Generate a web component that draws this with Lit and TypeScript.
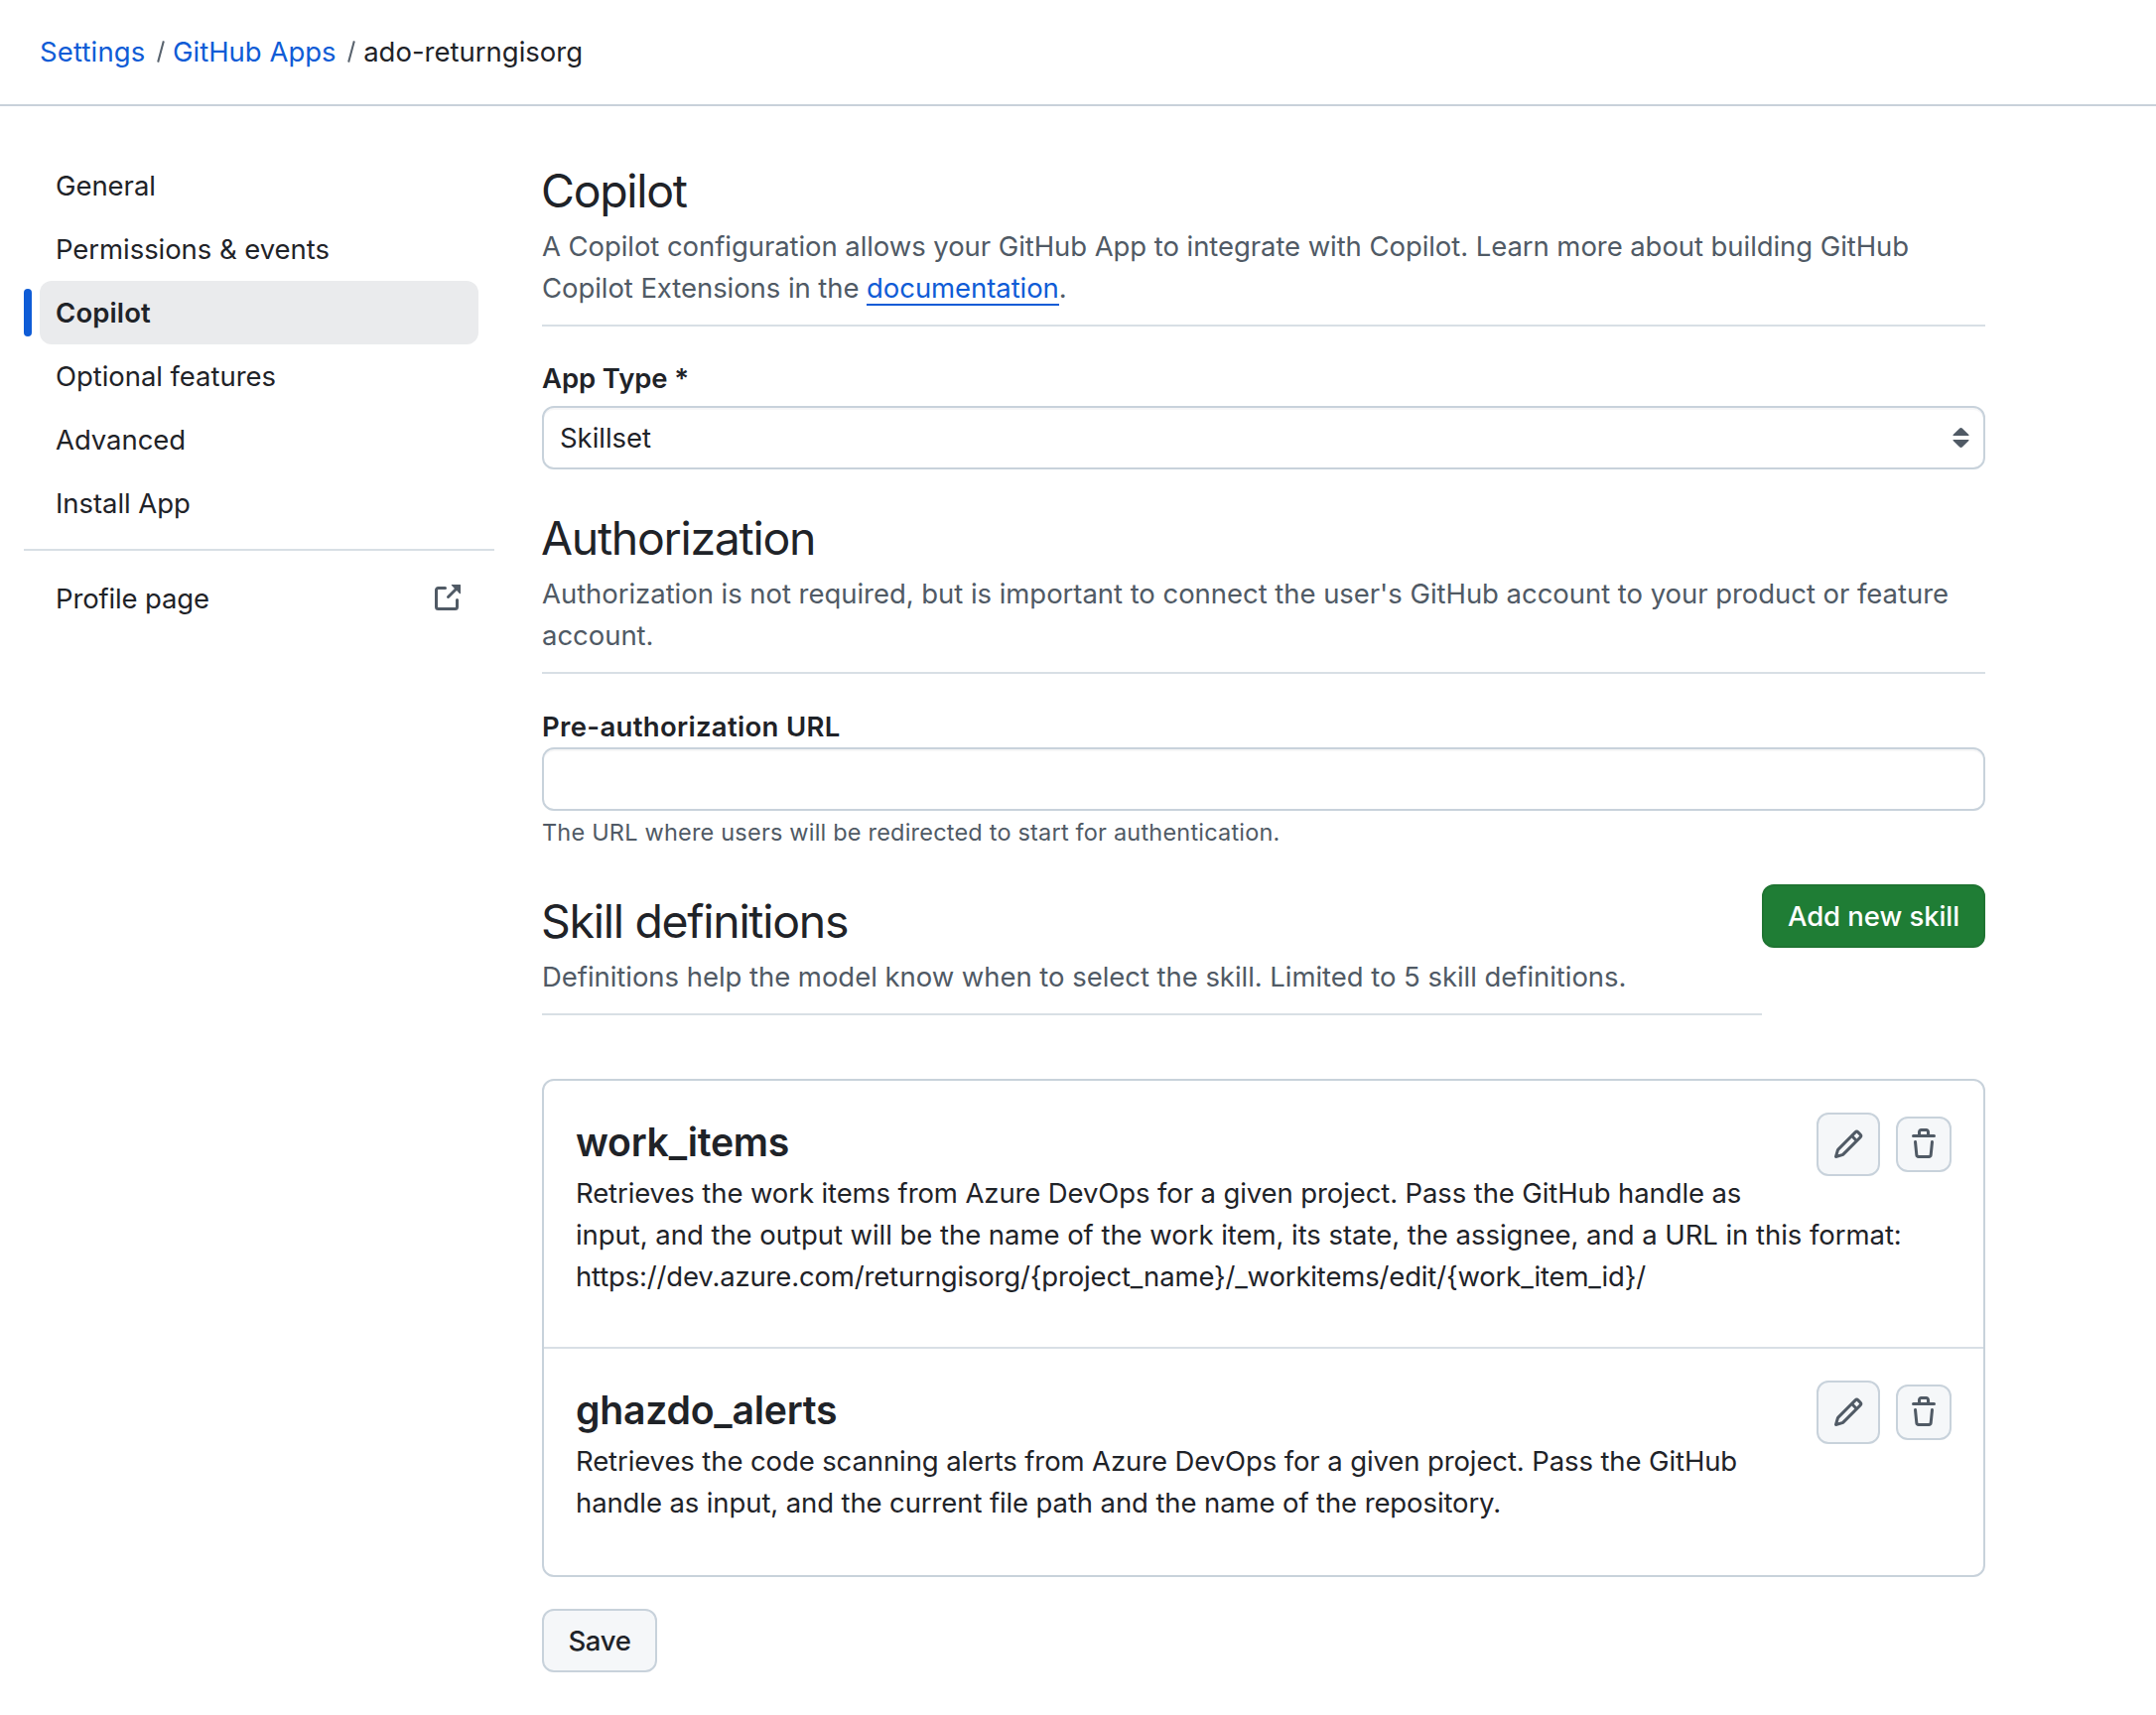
import { LitElement, html, css, svg } from "lit";
import { customElement } from "lit/decorators.js";
import { classMap } from "lit/directives/class-map.js";

const externalIcon = svg`<path d="M3.75 2h3.5a.75.75 0 0 1 0 1.5h-3.5a.25.25 0 0 0-.25.25v8.5c0 .138.112.25.25.25h8.5a.25.25 0 0 0 .25-.25v-3.5a.75.75 0 0 1 1.5 0v3.5A1.75 1.75 0 0 1 12.25 14h-8.5A1.75 1.75 0 0 1 2 12.25v-8.5C2 2.784 2.784 2 3.75 2Zm6.854-1h4.146a.25.25 0 0 1 .25.25v4.146a.25.25 0 0 1-.427.177L13.03 4.03 9.28 7.78a.751.751 0 0 1-1.042-.018.751.751 0 0 1-.018-1.042l3.75-3.75-1.543-1.543A.25.25 0 0 1 10.604 1Z"/>`;
const pencilIcon = svg`<path d="M11.013 1.427a1.75 1.75 0 0 1 2.474 0l1.086 1.086a1.75 1.75 0 0 1 0 2.474l-8.61 8.61c-.21.21-.47.364-.756.445l-3.251.93a.75.75 0 0 1-.927-.928l.929-3.25c.081-.286.235-.547.445-.758l8.61-8.61Zm.176 4.823L9.75 4.81l-6.286 6.287a.253.253 0 0 0-.064.108l-.558 1.953 1.953-.558a.253.253 0 0 0 .108-.064Zm1.238-3.763a.25.25 0 0 0-.354 0L10.811 3.75l1.439 1.44 1.263-1.263a.25.25 0 0 0 0-.354Z"/>`;
const trashIcon = svg`<path d="M11 1.75V3h2.25a.75.75 0 0 1 0 1.5H2.75a.75.75 0 0 1 0-1.5H5V1.75C5 .784 5.784 0 6.75 0h2.5C10.216 0 11 .784 11 1.75ZM4.496 6.675l.66 6.6a.25.25 0 0 0 .249.225h5.19a.25.25 0 0 0 .249-.225l.66-6.6a.75.75 0 0 1 1.492.149l-.66 6.6A1.748 1.748 0 0 1 10.595 15h-5.19a1.75 1.75 0 0 1-1.741-1.575l-.66-6.6a.75.75 0 1 1 1.492-.15ZM6.5 1.75V3h3V1.75a.25.25 0 0 0-.25-.25h-2.5a.25.25 0 0 0-.25.25Z"/>`;

const icon = (shape: unknown) =>
  html`<svg class="icon" viewBox="0 0 16 16" width="32" height="32" fill="currentColor" aria-hidden="true">${shape}</svg>`;

interface Skill {
  name: string;
  lines: { text: string; fit: string }[];
}

const NAV = ["General", "Permissions & events", "Copilot", "Optional features", "Advanced", "Install App"];

const SKILLS: Skill[] = [
  {
    name: "work_items",
    lines: [
      { text: "Retrieves the work items from Azure DevOps for a given project. Pass the GitHub handle as", fit: "snug" },
      { text: "input, and the output will be the name of the work item, its state, the assignee, and a URL in this format:", fit: "loose" },
      { text: "https://dev.azure.com/returngisorg/{project_name}/_workitems/edit/{work_item_id}/", fit: "tight" },
    ],
  },
  {
    name: "ghazdo_alerts",
    lines: [
      { text: "Retrieves the code scanning alerts from Azure DevOps for a given project. Pass the GitHub", fit: "snug" },
      { text: "handle as input, and the current file path and the name of the repository.", fit: "snug" },
    ],
  },
];

@customElement("app-root")
export class AppRoot extends LitElement {
  static styles = css`
    :host {
      display: block;
      min-height: 1728px;
      background: #fff;
      color: #1f2328;
      font: 400 27.5px/42px Inter, "Liberation Sans", sans-serif;
      letter-spacing: -0.04px;
    }
    * { box-sizing: border-box; }
    a { color: #0f5cd6; text-decoration: none; }
    h1, h2, h3, p, ul { margin: 0; padding: 0; }
    .icon { display: block; flex: none; }

    .crumbs {
      display: flex;
      align-items: center;
      height: 107px;
      padding: 0 40px 1px;
      border-bottom: 2px solid #c8d1da;
      letter-spacing: 0;
    }
    .crumbs .first { letter-spacing: 0.15px; }
    .slash {
      width: 2px;
      height: 22px;
      margin: 0 11.500px 0 14px;
      background: #59636e;
      transform: rotate(15deg);
    }

    .layout { display: flex; gap: 48px; padding: 48px 0 0 24px; }

    .side { width: 474px; flex: none; }
    .side ul { list-style: none; }
    .nav {
      display: flex;
      align-items: center;
      justify-content: space-between;
      position: relative;
      height: 64px;
      margin: 0 16px;
      padding: 0 16px;
      border-radius: 12px;
      letter-spacing: -0.06px;
    }
    .nav.current { background: #eaebed; font-weight: 600; letter-spacing: 0.12px; }
    .nav.current::before {
      content: "";
      position: absolute;
      left: -16px;
      top: 8px;
      width: 8px;
      height: 48px;
      border-radius: 4px;
      background: #0f5cd6;
    }
    .nav.profile { letter-spacing: -0.14px; }
    .nav .icon { color: #505a65; }
    .rule { height: 2px; margin: 14px 0 16px; background: #d8dfe5; }

    .main { width: 1454px; flex: none; }
    .head { border-bottom: 2px solid #d8dfe5; padding-bottom: 16px; color: #505a65; }
    .head h2 {
      margin-left: -1px;
      padding-top: 2px;
      color: #1f2328;
      font-size: 46.4px;
      font-weight: 400;
      line-height: 70px;
      letter-spacing: -1.26px;
    }
    .line { display: block; white-space: nowrap; }
    .lead { letter-spacing: -0.07px; }
    .loose { letter-spacing: -0.045px; }
    .snug { letter-spacing: -0.11px; }
    .tight { letter-spacing: -0.165px; }
    .doc { display: inline-block; height: 39px; line-height: 42px; vertical-align: top; border-bottom: 2px solid #0f5cd6; }

    .label { display: block; font-weight: 600; }
    .label.type { padding: 31px 0 7px; letter-spacing: -0.1px; }
    .label.url { padding-top: 32px; letter-spacing: 0.32px; }
    .field {
      display: flex;
      align-items: center;
      justify-content: space-between;
      height: 64px;
      padding: 0 14.500px 0 16px;
      border: 2px solid #c8d2db;
      border-radius: 12px;
      box-shadow: inset 0 2px 0 rgba(31, 35, 40, 0.04);
    }
    .section { margin-top: 32px; }
    .caption {
      height: 42px;
      padding-top: 4px;
      color: #505a65;
      font-size: 23.500px;
      line-height: 36px;
      letter-spacing: 0.2px;
    }

    .skills-head { display: flex; align-items: flex-start; margin-top: 32px; }
    .skills-head .head { flex: 1; }
    .btn {
      display: inline-flex;
      align-items: center;
      justify-content: center;
      height: 64px;
      padding: 0;
      border: 2px solid #c8d2db;
      border-radius: 12px;
      background: #f5f7f9;
      color: #1f2328;
      font: inherit;
      font-weight: 500;
      letter-spacing: -0.3px;
    }
    .btn.add {
      width: 225px;
      border-color: #1f7432;
      background: #1f7d35;
      color: #fff;
      letter-spacing: -0.06px;
    }
    .btn.save { width: 116px; margin-top: 32px; }
    .btn.edit { width: 64px; color: #505a65; }
    .btn.trash { width: 56px; height: 56px; color: #505a65; }

    .card { margin-top: 64px; border: 2px solid #c8d2db; border-radius: 12px; }
    .skill { padding: 32px 32px 50px; }
    .skill:last-child { padding-bottom: 52px; }
    .skill + .skill { border-top: 2px solid #d8dfe5; }
    .skill h3 { font-size: 39.200px; font-weight: 600; line-height: 60px; letter-spacing: -0.24px; }
    .actions { float: right; display: flex; align-items: center; gap: 16px; }
  `;

  private renderSkill(skill: Skill) {
    return html`
      <article class="skill">
        <div class="actions">
          <button class="btn edit" aria-label="Edit">${icon(pencilIcon)}</button>
          <button class="btn trash" aria-label="Delete">${icon(trashIcon)}</button>
        </div>
        <h3>${skill.name}</h3>
        <p>${skill.lines.map((l) => html`<span class="line ${l.fit}">${l.text}</span>`)}</p>
      </article>
    `;
  }

  render() {
    return html`
      <header class="crumbs">
        <a class="first">Settings</a><span class="slash"></span><a>GitHub Apps</a><span class="slash"></span><span>ado-returngisorg</span>
      </header>
      <div class="layout">
        <nav class="side">
          <ul>
            ${NAV.map((n) => html`<li class=${classMap({ nav: true, current: n === "Copilot" })}>${n}</li>`)}
          </ul>
          <div class="rule"></div>
          <div class="nav profile"><span>Profile page</span>${icon(externalIcon)}</div>
        </nav>
        <main class="main">
          <div class="head">
            <h2>Copilot</h2>
            <p>
              <span class="line lead">A Copilot configuration allows your GitHub App to integrate with Copilot. Learn more about building GitHub</span>
              <span class="line lead">Copilot Extensions in the <a class="doc">documentation</a>.</span>
            </p>
          </div>
          <label class="label type">App Type *</label>
          <div class="field">
            <span>Skillset</span>
            <svg width="17" height="20" viewBox="0 0 17 20" fill="#505a65" aria-hidden="true">
              <path d="M1 8Q0 8 .6 7L7 .7Q8.500-.6 10 .7L16.400 7Q17 8 16 8Z" />
              <path d="M1 12Q0 12 .6 13L7 19.300Q8.500 20.600 10 19.300L16.400 13Q17 12 16 12Z" />
            </svg>
          </div>
          <div class="head section">
            <h2>Authorization</h2>
            <p>
              <span class="line loose">Authorization is not required, but is important to connect the user's GitHub account to your product or feature</span>
              <span class="line loose">account.</span>
            </p>
          </div>
          <label class="label url">Pre-authorization URL</label>
          <div class="field"></div>
          <p class="caption">The URL where users will be redirected to start for authentication.</p>
          <div class="skills-head">
            <div class="head">
              <h2>Skill definitions</h2>
              <p class="line loose">Definitions help the model know when to select the skill. Limited to 5 skill definitions.</p>
            </div>
            <button class="btn add">Add new skill</button>
          </div>
          <section class="card">${SKILLS.map((s) => this.renderSkill(s))}</section>
          <button class="btn save">Save</button>
        </main>
      </div>
    `;
  }
}
